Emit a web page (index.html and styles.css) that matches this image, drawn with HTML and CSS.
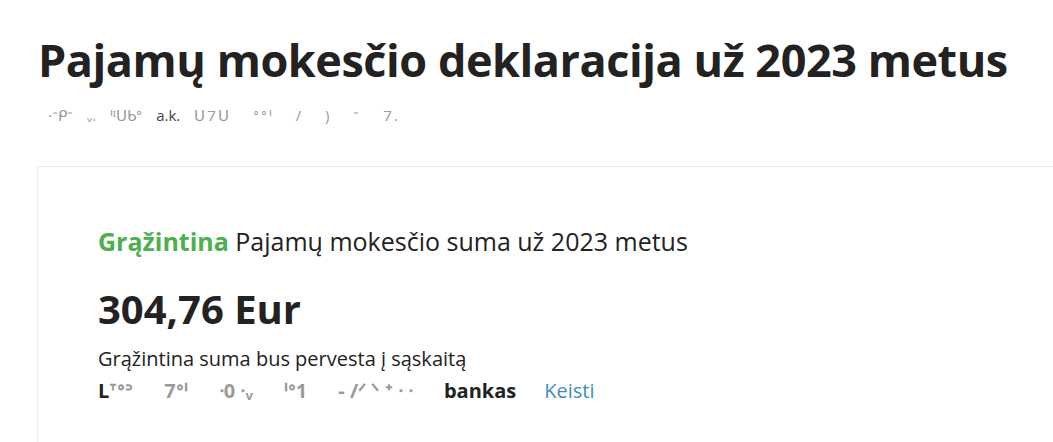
FILE: index.html
```html
<!DOCTYPE html>
<html lang="lt">
<head>
  <meta charset="UTF-8">
  <meta name="viewport" content="width=device-width, initial-scale=1.0">
  <title>Pajamų mokesčio deklaracija</title>
  <link rel="stylesheet" href="styles.css">
</head>
<body>
  <div class="page">
    <h1 class="page-title">Pajamų mokesčio deklaracija už 2023 metus</h1>
    <div class="person">
      <span class="blur">·ᐨᑭᐨ</span>
      <span class="blur">ᵥ.</span>
      <span class="blur">ᑊᴵᑌᑲᐤ</span>
      <span>a.k.</span>
      <span class="blur spread">ᑌ7ᑌ ᐤᐤᑊ / ) ᐨ 7.</span>
    </div>

    <div class="card">
      <p class="card-lead"><span class="refund">Grąžintina</span> Pajamų mokesčio suma už 2023 metus</p>
      <div class="amount">304,76 Eur</div>
      <p class="note">Grąžintina suma bus pervesta į sąskaitą</p>
      <div class="account">
        <span class="account-no">
          <span>L<span class="blur">ᐪᐤᐣ</span></span>
          <span class="blur">7ᐤᑊ</span>
          <span class="blur">ᐧ0 ᐧᵥ</span>
          <span class="blur">ᑊᐤ1</span>
          <span class="blur">- /ᐟ ᐠ ᐩ ᐧ ᐧ</span>
          <span>bankas</span>
        </span>
        <a class="change-link" href="#">Keisti</a>
      </div>
    </div>
  </div>
</body>
</html>
```

FILE: styles.css
```css
body {
  margin: 0;
  padding: 0;
  background: #fff;
  color: #222;
  font-family: "Open Sans", "Noto Sans", sans-serif;
  overflow: hidden;
}

.page {
  padding: 31px 0 0 37px;
}

.page-title {
  margin: 0 0 0 1px;
  font-size: 45px;
  font-weight: 700;
  line-height: 58px;
  letter-spacing: -0.45px;
  color: #222;
}

.person {
  display: flex;
  gap: 14px;
  margin: 16px 0 0 11px;
  font-size: 15px;
  color: #444;
  line-height: 20px;
}

.blur {
  color: #9a9a9a;
}

.spread {
  word-spacing: 16px;
  letter-spacing: 2px;
}

.card {
  margin-top: 41px;
  border-top: 1px solid #ececec;
  border-left: 1px solid #ececec;
  padding: 57px 0 40px 60px;
}

.card-lead {
  margin: 0;
  font-size: 25px;
  line-height: 34px;
  color: #222;
}

.refund {
  color: #4caf50;
  font-weight: 700;
}

.amount {
  margin-top: 27px;
  font-size: 40px;
  font-weight: 700;
  line-height: 48px;
  color: #222;
}

.note {
  margin: 12px 0 0;
  font-size: 20px;
  line-height: 28px;
  color: #222;
}

.account {
  display: flex;
  align-items: baseline;
  gap: 28px;
  margin-top: 4px;
  font-size: 20px;
  line-height: 28px;
}

.account-no {
  display: flex;
  gap: 31px;
  font-weight: 700;
}

.change-link {
  color: #3d8fc0;
  text-decoration: none;
}
```
